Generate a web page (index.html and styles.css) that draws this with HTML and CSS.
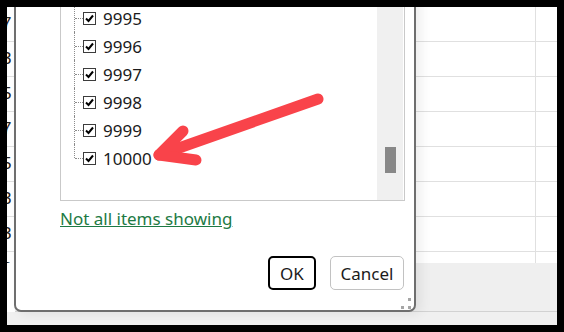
FILE: index.html
```html
<!DOCTYPE html>
<html lang="en">
<head>
    <meta charset="UTF-8">
    <title>Filter</title>
    <link rel="stylesheet" href="styles.css">
</head>
<body>
<div class="screen">
    <div class="sheet">
        <div class="row"><div class="cell"><span class="val">7</span></div></div>
        <div class="row"><div class="cell"><span class="val">3</span></div></div>
        <div class="row"><div class="cell"><span class="val">5</span></div></div>
        <div class="row"><div class="cell"><span class="val">7</span></div></div>
        <div class="row"><div class="cell"><span class="val">5</span></div></div>
        <div class="row"><div class="cell"><span class="val">3</span></div></div>
        <div class="row"><div class="cell"><span class="val">3</span></div></div>
        <div class="row"><div class="cell"><span class="val">6</span></div></div>
    </div>
    <div class="sheet-foot"></div>
    <div class="sheet-bottom"></div>

    <div class="dialog">
        <div class="listbox">
            <ul class="tree">
                <li><span class="check"><svg viewBox="0 0 11 11"><path d="M2 5.5 L4.5 8 L9 2.5"/></svg></span>9994</li>
                <li><span class="check"><svg viewBox="0 0 11 11"><path d="M2 5.5 L4.5 8 L9 2.5"/></svg></span>9995</li>
                <li><span class="check"><svg viewBox="0 0 11 11"><path d="M2 5.5 L4.5 8 L9 2.5"/></svg></span>9996</li>
                <li><span class="check"><svg viewBox="0 0 11 11"><path d="M2 5.5 L4.5 8 L9 2.5"/></svg></span>9997</li>
                <li><span class="check"><svg viewBox="0 0 11 11"><path d="M2 5.5 L4.5 8 L9 2.5"/></svg></span>9998</li>
                <li><span class="check"><svg viewBox="0 0 11 11"><path d="M2 5.5 L4.5 8 L9 2.5"/></svg></span>9999</li>
                <li><span class="check"><svg viewBox="0 0 11 11"><path d="M2 5.5 L4.5 8 L9 2.5"/></svg></span>10000</li>
            </ul>
            <div class="scrollbar"><div class="thumb"></div></div>
        </div>
        <a class="more" href="#">Not all items showing</a>
        <div class="buttons">
            <button class="ok">OK</button>
            <button class="cancel">Cancel</button>
        </div>
        <svg class="grip" viewBox="0 0 11 11">
            <rect x="8" y="0" width="3" height="3"/>
            <rect x="1" y="8" width="3" height="3"/>
            <rect x="8" y="8" width="3" height="3"/>
        </svg>
    </div>

    <svg class="arrow" viewBox="0 0 550 318">
        <path d="M311 92 L152 148"/>
        <path d="M176 124 L152 148 L189 153"/>
    </svg>
</div>
</body>
</html>
```

FILE: styles.css
```css
body {
    margin: 0;
    background: #000;
    font-family: "Noto Sans", sans-serif;
}

.screen {
    position: relative;
    margin: 7px;
    width: 550px;
    height: 318px;
    overflow: hidden;
    background: #fff;
}

/* spreadsheet behind the dialog */
.sheet {
    height: 256px;
    overflow: hidden;
}

.row {
    height: 34px;
    border-bottom: 1px solid #e0e0e0;
    display: flex;
}

.cell {
    width: 528px;
    border-right: 1px solid #e0e0e0;
    display: flex;
    align-items: center;
}

.val {
    margin-left: -5px;
    font-family: "Liberation Sans", sans-serif;
    font-size: 17px;
    color: #222;
}

.sheet-foot {
    height: 48px;
    margin-left: 8px;
    background: #efefef;
    border-bottom: 1px solid #d2d2d2;
}

.sheet-bottom {
    height: 13px;
    background: #f0f0f0;
}

/* filter dialog */
.dialog {
    position: absolute;
    left: 7px;
    top: -47px;
    width: 402px;
    height: 352px;
    box-sizing: border-box;
    border: 2px solid #6e6e6e;
    border-radius: 0 0 7px 7px;
    background: #fff;
    box-shadow: 5px 2px 12px rgba(0, 0, 0, 0.07);
    padding: 0 9px 0 44px;
    display: flex;
    flex-direction: column;
}

.listbox {
    margin-top: 13px;
    height: 226px;
    box-sizing: border-box;
    border: 1px solid #c9c9c9;
    display: flex;
    overflow: hidden;
}

.tree {
    flex: 1;
    margin: 0;
    padding: 0;
    list-style: none;
}

.tree li {
    position: relative;
    height: 28px;
    padding-left: 22px;
    display: flex;
    align-items: center;
    font-size: 17px;
    color: #1b1b1b;
}

.tree li::before {
    content: "";
    position: absolute;
    left: 13px;
    top: 0;
    bottom: 0;
    border-left: 1px dotted #8c8c8c;
}

.tree li:last-child::before {
    bottom: 50%;
}

.tree li::after {
    content: "";
    position: absolute;
    left: 14px;
    top: 50%;
    width: 8px;
    border-top: 1px dotted #8c8c8c;
}

.check {
    width: 13px;
    height: 13px;
    box-sizing: border-box;
    border: 1px solid #3c3c3c;
    margin-right: 7px;
    display: flex;
    align-items: center;
    justify-content: center;
}

.check svg {
    width: 11px;
    height: 11px;
    fill: none;
    stroke: #000;
    stroke-width: 2;
}

.scrollbar {
    width: 26px;
    margin-right: 1px;
    background: #f0f0f0;
    padding-top: 171px;
}

.thumb {
    width: 11px;
    height: 26px;
    margin-left: 8px;
    background: #888;
}

.more {
    align-self: flex-start;
    margin-top: 6px;
    font-size: 17px;
    line-height: 23px;
    color: #1d7a44;
}

.buttons {
    margin-top: 26px;
    margin-right: 1px;
    display: flex;
    justify-content: flex-end;
    gap: 14px;
}

.buttons button {
    height: 34px;
    background: #fff;
    border-radius: 5px;
    font-family: "Noto Sans", sans-serif;
    font-size: 17px;
    color: #1b1b1b;
    padding: 0;
}

.ok {
    width: 48px;
    border: 2px solid #000;
}

.cancel {
    width: 74px;
    border: 1px solid #c2c2c2;
}

.grip {
    position: absolute;
    right: 3px;
    bottom: 1px;
    width: 11px;
    height: 11px;
    fill: #a6a6a6;
}

.arrow {
    position: absolute;
    left: 0;
    top: 0;
    width: 550px;
    height: 318px;
    fill: none;
    stroke: #f9434a;
    stroke-width: 11;
    stroke-linecap: round;
    stroke-linejoin: round;
    pointer-events: none;
}
```
